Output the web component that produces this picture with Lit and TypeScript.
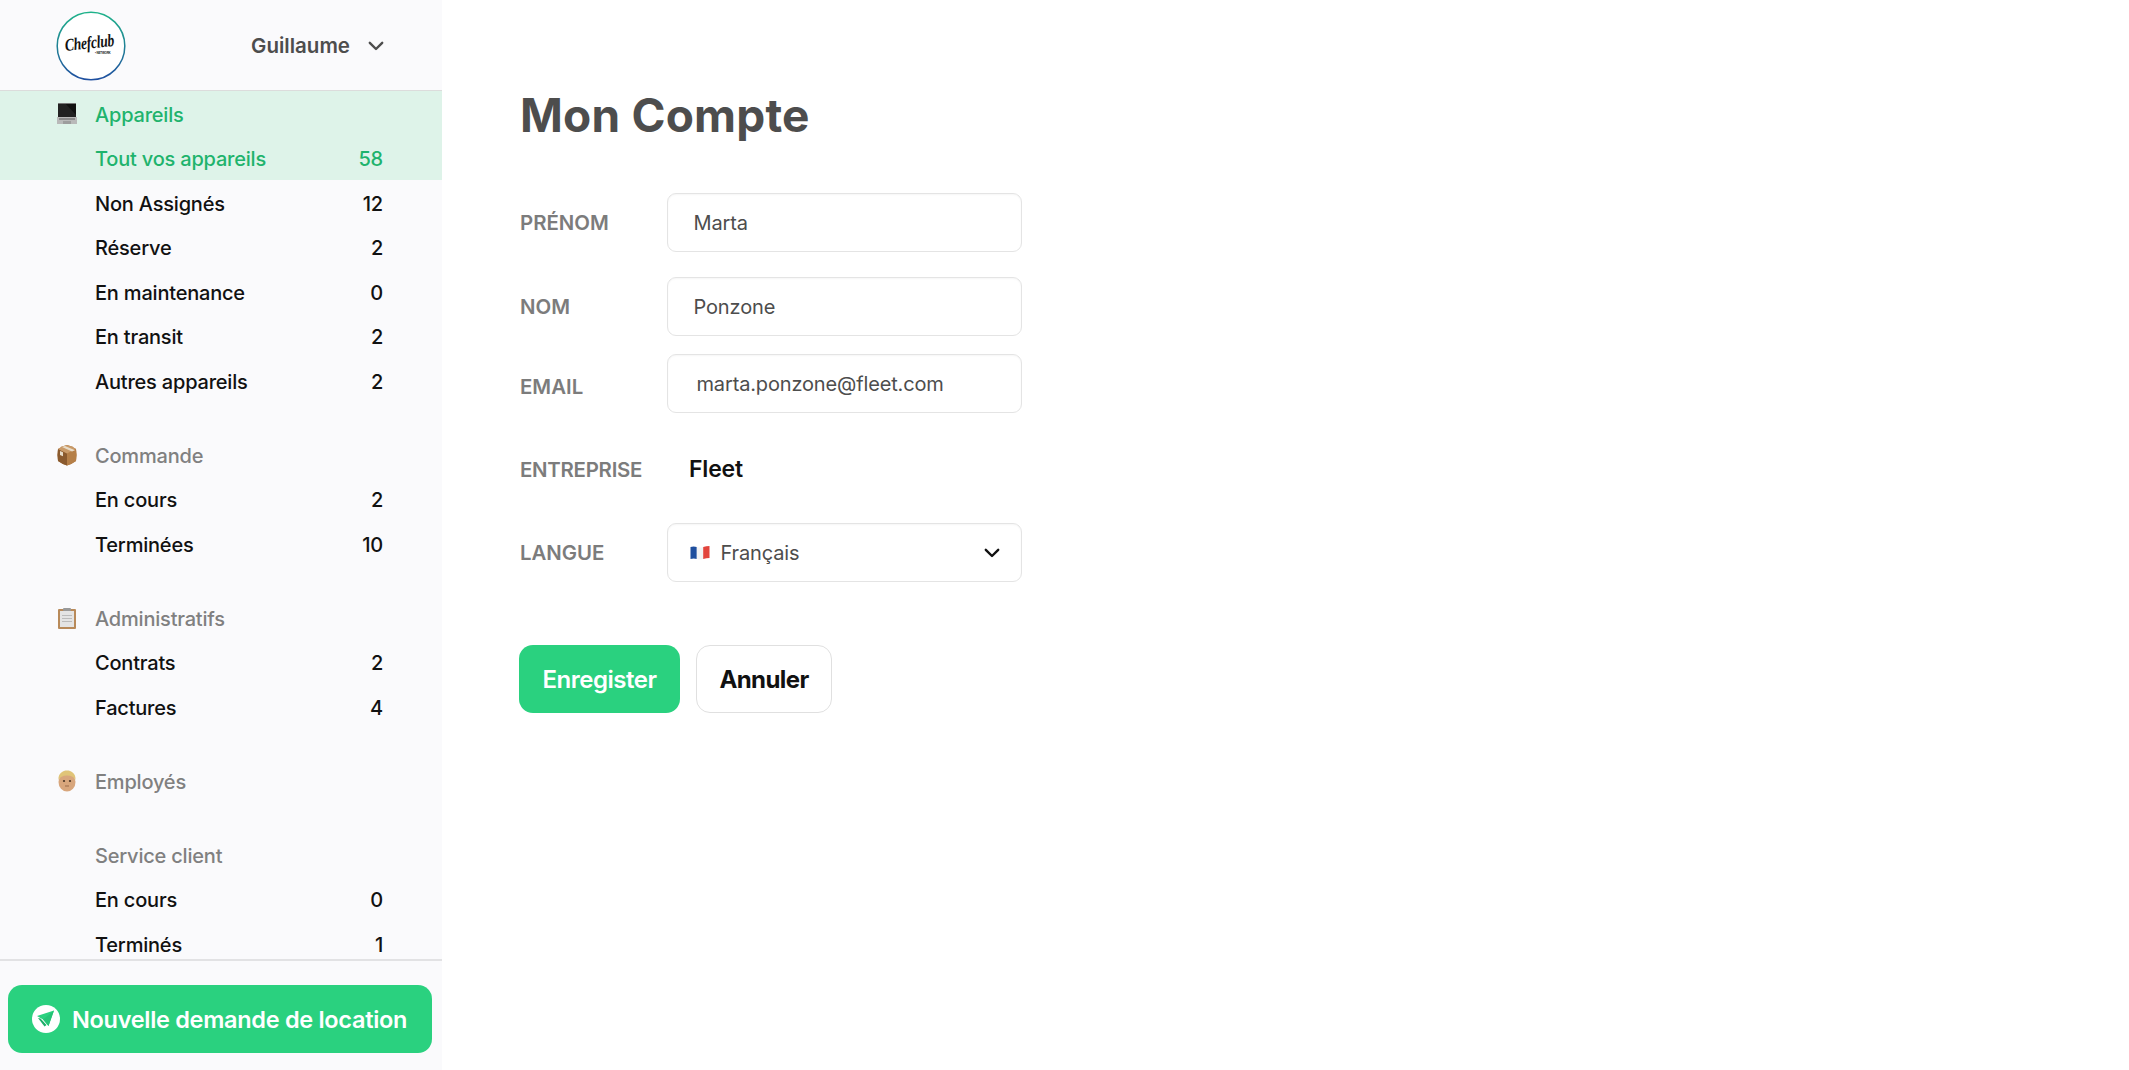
import { LitElement, html, css, svg } from "lit";
import { customElement } from "lit/decorators.js";

const laptop = svg`<svg viewBox="0 0 22 22" width="22" height="22"><rect x="2" y="0" width="18" height="14" fill="#222"/><path d="M9 0h11v12z" fill="#111"/><rect x="2" y="0" width="18" height="1" fill="#777"/><path d="M1 14h20v7H1z" fill="#b9b9b9"/><rect x="3" y="15" width="16" height="2" fill="#8a8a8a"/><rect x="7" y="18" width="8" height="3" fill="#9d9d9d"/></svg>`;
const box = svg`<svg viewBox="0 0 22 22" width="22" height="22"><path d="M11 1q5 1 9 4 1 6 0 12-4 3-9 4.500-5-1.500-9-4.500-1-6 0-12 4-3 9-4z" fill="#a9713c"/><path d="M2 5l9 4.500V21.500Q6 20 2 17q-1-6 0-12z" fill="#8a5a2e"/><path d="M20 5l-9 4.500V21.500q5-1.500 9-4.500 1-6 0-12z" fill="#b57f48"/><path d="M2 5q4-3 9-4 5 1 9 4l-9 4.500z" fill="#c99a68"/><path d="M6 3l10 4.500 3-1.300L9 2z" fill="#e8dcc8"/><path d="M4 7l3 1.300v4l-3-1.300z" fill="#e8dcc8"/></svg>`;
const clip = svg`<svg viewBox="0 0 22 22" width="22" height="22"><rect x="2" y="2" width="18" height="20" rx="1" fill="#b88a5a"/><rect x="4" y="4" width="14" height="16" fill="#e4e4e4"/><rect x="6" y="8" width="10" height="1" fill="#bbb"/><rect x="6" y="11" width="10" height="1" fill="#bbb"/><rect x="6" y="14" width="10" height="1" fill="#bbb"/><rect x="7" y="1" width="8" height="3" rx="1" fill="#999"/></svg>`;
const face = svg`<svg viewBox="0 0 22 22" width="22" height="22"><ellipse cx="11" cy="12" rx="8.500" ry="9.500" fill="#d8a67c"/><path d="M2.500 10C2 3 7 0.500 11 0.500S20 3 19.500 10c-1.500-3-4-4.500-8.500-4.500S4 7 2.500 10z" fill="#e0c478"/><circle cx="8" cy="11" r="1.100" fill="#4a3524"/><circle cx="14" cy="11" r="1.100" fill="#4a3524"/><path d="M9 16h4" stroke="#9a6a48" stroke-width="1"/></svg>`;
const flag = svg`<svg viewBox="0 0 20 15" width="20" height="15"><path d="M0.500 2q3-1 6.300 0v12q-3-1-6.300 0z" fill="#1f4f9e"/><path d="M6.800 2q3 1 6.400 0v12q-3 1-6.400 0z" fill="#f3f3f3"/><path d="M13.200 2q3-1 6.300-1v12q-3 0-6.300 1z" fill="#e2443c"/></svg>`;
const chevron = (w: number, c: string) => svg`<svg viewBox="0 0 16 10" width="${w}" height="${(w * 10) / 16}"><path d="M1.800 1.800L8 8l6.200-6.200" fill="none" stroke="${c}" stroke-width="2.400" stroke-linecap="round" stroke-linejoin="round"/></svg>`;
const plane = svg`<svg viewBox="0 0 28 28" width="28" height="28"><circle cx="14" cy="14" r="14" fill="#fff"/><path d="M22 5.500L5 11l6 3.500L16.500 21z" fill="#2ad17f"/><path d="M22 5.500L11 14.500l5.500 6.500z" fill="#25c476"/><path d="M6 13l6.500 8.500 2-1.500-6-6.500z" fill="#1cae68"/></svg>`;
const logo = svg`<svg viewBox="0 0 70 70" width="70" height="70">
  <defs><linearGradient id="g" x1="0" y1="0" x2="0" y2="1"><stop offset="0" stop-color="#1fb38a"/><stop offset="1" stop-color="#1f4fa0"/></linearGradient></defs>
  <circle cx="35" cy="35" r="33.800" fill="#fff" stroke="url(#g)" stroke-width="1.500"/>
  <g transform="translate(9.500 40) rotate(-6) scale(1 1.300)"><text font-family="Liberation Serif, serif" font-style="italic" font-weight="700" font-size="13.500" fill="#111">Chefclub</text></g>
  <text x="39" y="42.500" font-family="Liberation Sans, sans-serif" font-weight="700" font-size="3" fill="#222">• NETWORK</text>
</svg>`;

type Row = [string, string];
interface Group { icon?: unknown; title: string; rows: Row[]; active?: boolean }

const groups: Group[] = [
  { icon: laptop, title: "Appareils", active: true, rows: [["Tout vos appareils", "58"], ["Non Assignés", "12"], ["Réserve", "2"], ["En maintenance", "0"], ["En transit", "2"], ["Autres appareils", "2"]] },
  { icon: box, title: "Commande", rows: [["En cours", "2"], ["Terminées", "10"]] },
  { icon: clip, title: "Administratifs", rows: [["Contrats", "2"], ["Factures", "4"]] },
  { icon: face, title: "Employés", rows: [] },
  { title: "Service client", rows: [["En cours", "0"], ["Terminés", "1"]] },
];

@customElement("app-root")
export class AppRoot extends LitElement {
  static styles = css`
    :host { display: flex; height: 100vh; overflow: hidden; background: #fff; color: #111; font-family: Inter, "Noto Sans", sans-serif; font-size: 20px; font-weight: 500; letter-spacing: -0.2px; }
    * { box-sizing: border-box; }
    .side { width: 442px; flex: none; height: 100%; background: #fafafc; display: flex; flex-direction: column; }
    .head { height: 91px; flex: none; display: flex; align-items: center; justify-content: space-between; padding: 0 58px 0 56px; border-bottom: 1px solid #dcdcdc; }
    .logo { display: flex; margin-top: 1px; }
    .user { display: flex; align-items: center; gap: 18px; color: #4d4d4d; font-weight: 600; font-size: 20.5px; letter-spacing: 0; padding-top: 1px; }
    .nav { flex: 1; min-height: 0; overflow: hidden; }
    .group { margin-bottom: 29.5px; }
    .line { height: 44.5px; display: flex; align-items: center; padding: 2.5px 59px 0 95px; position: relative; }
    .title { color: #808080; }
    .ico { position: absolute; left: 56px; top: 12px; display: flex; }
    .num { margin-left: auto; }
    .active-wrap .title, .active-wrap .on { background: #def3e9; color: #1fb36d; }
    .foot { flex: none; height: 111px; border-top: 2px solid #e2e2e4; padding: 24px 10px 0 8px; }
    .cta { height: 68px; border-radius: 14px; background: #2ad17f; color: #fff; display: flex; align-items: center; gap: 12px; padding: 0 24px; font-size: 23.5px; font-weight: 600; letter-spacing: -0.3px; white-space: nowrap; }
    .cta svg { flex: none; }
    .main { flex: 1; padding: 86px 0 0 520px; margin-left: -442px; }
    h1 { margin: 0 0 49px; font-size: 46px; line-height: 58px; font-weight: 700; color: #4d4d4d; letter-spacing: 0.2px; }
    .form { display: grid; grid-template-columns: 147px 355px; align-items: center; }
    .lab { color: #7c7c7c; font-size: 20.4px; font-weight: 600; letter-spacing: 0; }
    .inp { height: 59px; border: 1.5px solid #e4e4e4; border-radius: 9px; background: #fff; display: flex; align-items: center; padding: 0 25.5px; color: #4d4d4d; font-size: 20px; font-weight: 400; letter-spacing: -0.15px; box-shadow: inset 0 1px 2px rgba(0,0,0,.04); }
    .r2 { margin-top: 25px; }
    .r3 { margin-top: 18px; }
    .lab3 { padding-top: 6px; }
    .email { padding-left: 28.5px; }
    .r4 { margin-top: 20px; height: 70px; display: flex; align-items: center; }
    .lab4 { padding-top: 3px; letter-spacing: -0.25px; }
    .fleet { padding-left: 22px; padding-top: 2px; font-size: 23px; font-weight: 600; color: #111; }
    .r5 { margin-top: 20px; }
    .sel { padding: 0 21.5px; gap: 11px; }
    .sel svg:last-child { margin-left: auto; }
    .btns { display: flex; gap: 16px; margin-top: 63px; margin-left: -1px; }
    .btn { height: 68px; border-radius: 14px; display: flex; align-items: center; justify-content: center; font-size: 24px; font-weight: 600; letter-spacing: -0.5px; }
    .save { width: 161px; background: #2ad17f; color: #fff; }
    .cancel { width: 136px; background: #fff; border: 1.5px solid #e0e0e0; color: #111; font-weight: 700; letter-spacing: -0.6px; }
  `;

  private group(g: Group) {
    return html`<div class="group ${g.active ? "active-wrap" : ""}">
      <div class="line title">${g.icon ? html`<span class="ico">${g.icon}</span>` : ""}<span>${g.title}</span></div>
      ${g.rows.map((r, i) => html`<div class="line ${g.active && i === 0 ? "on" : ""}"><span>${r[0]}</span><span class="num">${r[1]}</span></div>`)}
    </div>`;
  }

  render() {
    return html`
      <aside class="side">
        <div class="head"><div class="logo">${logo}</div><div class="user"><span>Guillaume</span>${chevron(16, "#4d4d4d")}</div></div>
        <div class="nav">${groups.map((g) => this.group(g))}</div>
        <div class="foot"><div class="cta">${plane}<span>Nouvelle demande de location</span></div></div>
      </aside>
      <main class="main">
        <h1>Mon Compte</h1>
        <div class="form">
          <div class="lab">PRÉNOM</div><div class="inp">Marta</div>
          <div class="lab r2">NOM</div><div class="inp r2">Ponzone</div>
          <div class="lab lab3 r3">EMAIL</div><div class="inp r3 email">marta.ponzone@fleet.com</div>
          <div class="lab lab4 r4">ENTREPRISE</div><div class="r4 fleet">Fleet</div>
          <div class="lab r5">LANGUE</div><div class="inp sel r5">${flag}<span>Français</span>${chevron(16, "#111")}</div>
        </div>
        <div class="btns"><div class="btn save">Enregister</div><div class="btn cancel">Annuler</div></div>
      </main>
    `;
  }
}
